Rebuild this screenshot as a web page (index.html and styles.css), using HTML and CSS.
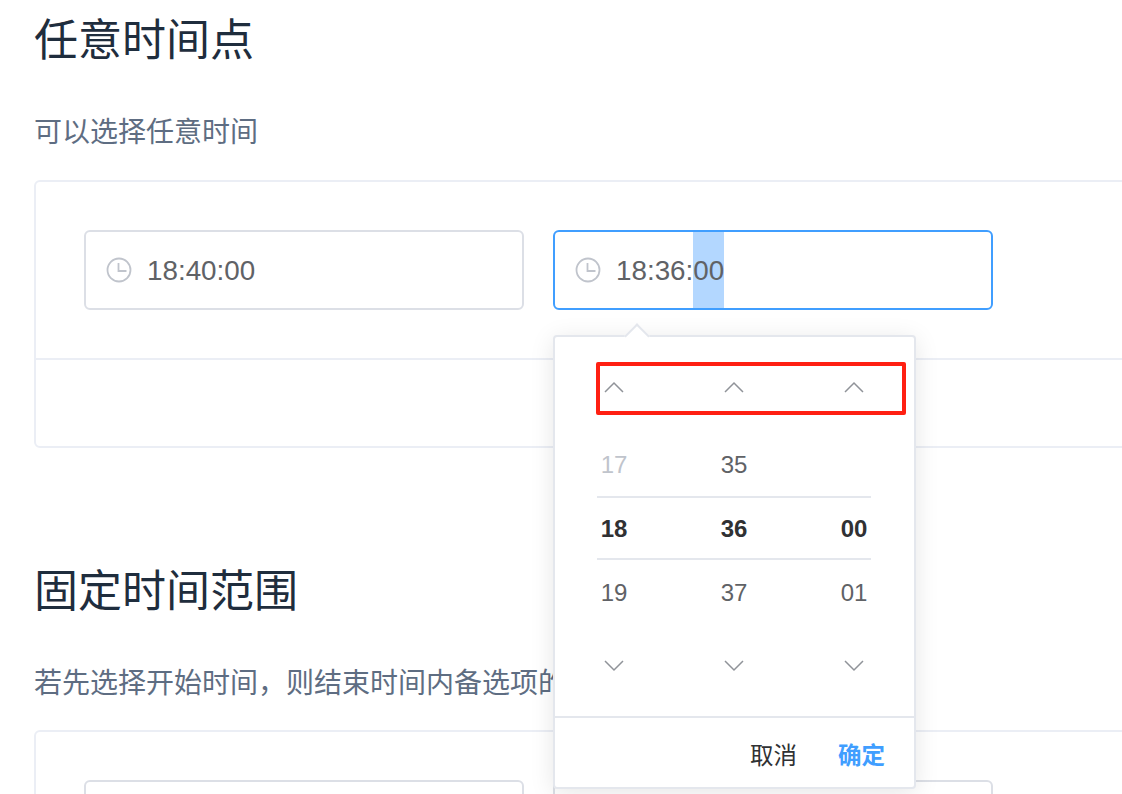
FILE: index.html
```html
<!DOCTYPE html>
<html lang="zh-CN">
<head>
<meta charset="utf-8">
<title>时间选择器</title>
<link rel="stylesheet" href="styles.css">
</head>
<body>
<main class="page">
  <h2 class="title">任意时间点</h2>
  <p class="desc">可以选择任意时间</p>
  <section class="demo">
    <div class="demo-row">
      <div class="picker">
        <div class="input">
          <svg class="clock" viewBox="0 0 26 26"><circle cx="13" cy="13" r="11.5"/><path d="M12.5 6v8h8"/></svg>
          <span class="value">18:40:00</span>
        </div>
      </div>
      <div class="picker">
        <div class="input input-active">
          <svg class="clock" viewBox="0 0 26 26"><circle cx="13" cy="13" r="11.5"/><path d="M12.5 6v8h8"/></svg>
          <span class="value">18:36:<span class="selected">00</span></span>
        </div>
        <div class="popover">
          <span class="popover-arrow"></span>
          <div class="spin-row arrows-up">
            <svg class="chev" viewBox="0 0 20 12"><path d="M1 11 10 2l9 9"/></svg>
            <svg class="chev" viewBox="0 0 20 12"><path d="M1 11 10 2l9 9"/></svg>
            <svg class="chev" viewBox="0 0 20 12"><path d="M1 11 10 2l9 9"/></svg>
          </div>
          <div class="spin-row num-row"><span class="num-disabled">17</span><span>35</span><span></span></div>
          <div class="spin-row num-row num-current"><span>18</span><span>36</span><span>00</span></div>
          <div class="spin-row num-row"><span>19</span><span>37</span><span>01</span></div>
          <div class="spin-row arrows-down">
            <svg class="chev" viewBox="0 0 20 12"><path d="M1 1l9 9 9-9"/></svg>
            <svg class="chev" viewBox="0 0 20 12"><path d="M1 1l9 9 9-9"/></svg>
            <svg class="chev" viewBox="0 0 20 12"><path d="M1 1l9 9 9-9"/></svg>
          </div>
          <div class="popover-footer">
            <span class="btn-cancel">取消</span>
            <span class="btn-ok">确定</span>
          </div>
          <div class="annotation"></div>
        </div>
      </div>
    </div>
    <div class="demo-foot"></div>
  </section>
  <h2 class="title title-second">固定时间范围</h2>
  <p class="desc desc-second">若先选择开始时间，则结束时间内备选项的状态将会随之改变</p>
  <section class="demo demo-second">
    <div class="demo-row">
      <div class="picker"><div class="input"></div></div>
      <div class="picker"><div class="input"></div></div>
    </div>
  </section>
</main>
</body>
</html>
```
FILE: styles.css
```css
* { box-sizing: border-box; }
html, body { margin: 0; height: 100%; overflow: hidden; background: #fff; }
body { font-family: "Liberation Sans", "Noto Sans CJK SC", sans-serif; }
.page { padding-left: 34px; width: 1400px; height: 794px; overflow: hidden; }
.title {
  margin: 0;
  height: 80px;
  font-size: 44px;
  line-height: 82px;
  font-weight: 400;
  color: #1f2d3d;
}
.title-second { margin-top: 103px; }
.desc {
  margin: 33px 0 0;
  height: 40px;
  font-size: 28px;
  line-height: 40px;
  color: #5e6d82;
  white-space: nowrap;
}
.demo {
  margin-top: 27px;
  width: 1300px;
  border: 2px solid #ebeef5;
  border-radius: 6px;
}
.demo-second { margin-top: 26px; }
.demo-row { display: flex; gap: 29px; padding: 48px; height: 176px; }
.demo-foot { height: 88px; border-top: 2px solid #ebeef5; }
.picker { position: relative; width: 440px; height: 80px; }
.input {
  display: flex;
  align-items: center;
  height: 80px;
  padding: 2px 0 0 20px;
  overflow: hidden;
  border: 2px solid #dcdfe6;
  border-radius: 6px;
  background: #fff;
  color: #606266;
  font-size: 27.8px;
}
.input-active { border-color: #409eff; }
.clock { width: 26px; height: 26px; flex: none; margin: 0 15px 2px 0; fill: none; stroke: #c0c4cc; stroke-width: 1.8; }
.value { line-height: 76px; white-space: nowrap; }
.selected { display: inline-block; height: 76px; background: #b3d7ff; box-shadow: 0 -1px 0 #b3d7ff; }
.popover {
  position: absolute;
  top: 105px;
  left: 0;
  z-index: 2;
  width: 363px;
  height: 454px;
  padding-top: 26px;
  border: 2px solid #e4e7ed;
  border-radius: 4px;
  background: #fff;
  box-shadow: 0 4px 24px rgba(0, 0, 0, .1);
}
.popover-arrow {
  position: absolute;
  top: -10px;
  left: 73px;
  width: 18px;
  height: 18px;
  background: #fff;
  border-top: 2px solid #e4e7ed;
  border-left: 2px solid #e4e7ed;
  transform: rotate(45deg);
}
.spin-row {
  display: grid;
  grid-template-columns: repeat(3, 120px);
  justify-items: center;
  align-items: center;
  margin-left: -1px;
}
.arrows-up { height: 48px; margin-bottom: 22px; }
.arrows-down { height: 82px; margin-bottom: 9px; }
.chev { width: 20px; height: 12px; fill: none; stroke: #909399; stroke-width: 1.5; }
.num-row { height: 64px; font-size: 24px; color: #606266; position: relative; }
.num-disabled { color: #c0c4cc; }
.num-current { font-weight: 700; color: #303133; }
.num-current::before {
  content: "";
  box-sizing: border-box;
  position: absolute;
  left: 43px;
  top: -1px;
  width: 274px;
  height: 64px;
  border-top: 2px solid #e4e7ed;
  border-bottom: 2px solid #e4e7ed;
}
.popover-footer {
  display: flex;
  justify-content: flex-end;
  align-items: center;
  gap: 41px;
  height: 71px;
  padding-top: 2px;
  padding-right: 29px;
  border-top: 2px solid #e4e7ed;
  font-size: 23.5px;
}
.btn-cancel { color: #303133; }
.btn-ok { color: #409eff; font-weight: 700; }
.annotation {
  position: absolute;
  left: 41px;
  top: 25px;
  width: 310px;
  height: 53px;
  border: 4px solid #ff2012;
  border-radius: 2px;
}
```
